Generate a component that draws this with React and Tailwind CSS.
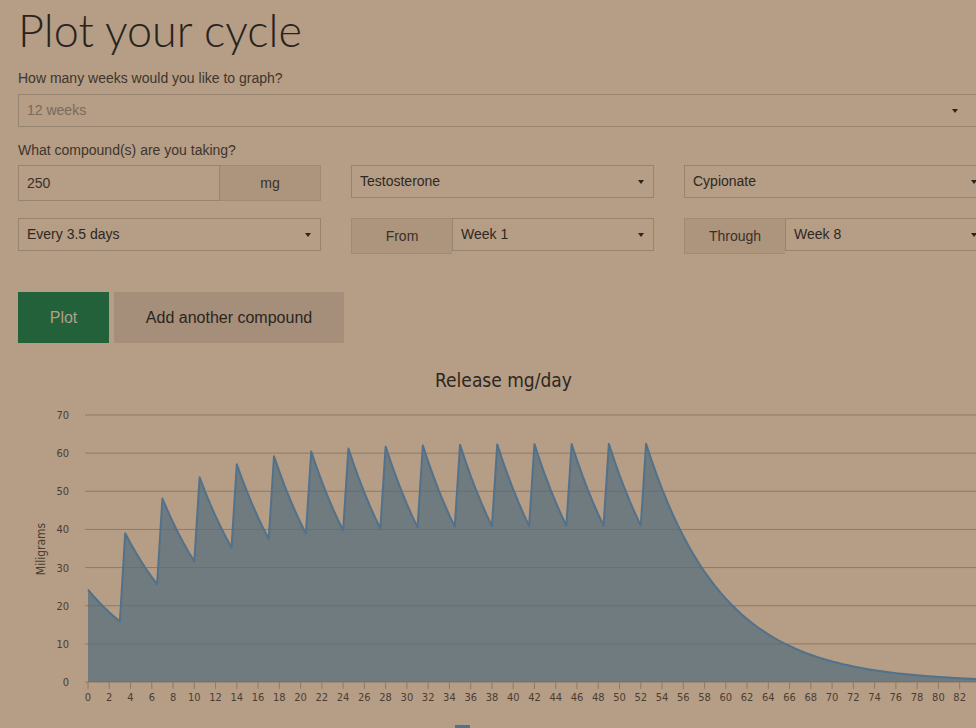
import React from "react";

function Caret() {
  return (
    <span className="absolute top-1/2 -translate-y-1/2 w-0 h-0 border-l-[3.5px] border-r-[3.5px] border-t-[4px] border-l-transparent border-r-transparent border-t-[#2b2520]" />
  );
}

function Select({ text, muted, className = "", caretClass = "right-[15px]" }) {
  return (
    <div
      className={
        "relative h-[33px] border border-[#978470] flex items-center pl-[8px] text-[14px] " +
        (muted ? "text-[#7a6a5a] " : "text-[#2f2822] ") +
        className
      }
    >
      <span>{text}</span>
      <span className={"absolute top-0 bottom-0 " + caretClass}>
        <Caret />
      </span>
    </div>
  );
}

function Addon({ text, className = "" }) {
  return (
    <div
      className={
        "h-[36px] bg-[#ac947d] border border-[#a08a74] flex items-center justify-center text-[14px] text-[#3a3028] " +
        className
      }
    >
      {text}
    </div>
  );
}

const K = 0.14;
const A = 24.2;
const X0 = 88;
const PXD = 10.63;
const Y0 = 327;
const PXM = 3.814;

function Chart() {
  const inj = Array.from({ length: 16 }, (_, i) => i * 3.5);
  const pts = [];
  for (let i = 0; i <= 168; i++) {
    const t = i * 0.5;
    let v = 0;
    for (const ti of inj) if (ti <= t + 1e-9) v += A * Math.exp(-K * (t - ti));
    pts.push([X0 + t * PXD, Y0 - v * PXM]);
  }
  const line = pts.map((p, i) => (i ? "L" : "M") + p[0].toFixed(2) + "," + p[1].toFixed(2)).join(" ");
  const area = line + ` L${pts[pts.length - 1][0].toFixed(2)},${Y0} L${X0},${Y0} Z`;
  const grid = [0, 10, 20, 30, 40, 50, 60, 70];
  const ticks = Array.from({ length: 43 }, (_, i) => i * 2);
  const font = "'DejaVu Sans Condensed', 'DejaVu Sans', sans-serif";
  return (
    <svg width="976" height="373" className="block mt-[12px]" fontFamily={font}>
      <text x="503.5" y="32" textAnchor="middle" fontSize="19" fill="#2e2620">
        Release mg/day
      </text>
      {grid.map((g) => (
        <g key={g}>
          <line x1="85" x2="976" y1={Y0 - g * PXM} y2={Y0 - g * PXM} stroke="#8e7b66" strokeWidth="1" />
          <text x="69" y={Y0 - g * PXM + 4} textAnchor="end" fontSize="11" fill="#4a3e34">
            {g}
          </text>
        </g>
      ))}
      <text
        x="45"
        y="194"
        textAnchor="middle"
        fontSize="12"
        fill="#4a3e34"
        transform="rotate(-90 45 194)"
      >
        Miligrams
      </text>
      <path d={area} fill="rgba(81,108,123,0.7)" />
      <path d={line} fill="none" stroke="#52718a" strokeWidth="2" strokeLinejoin="round" />
      {ticks.map((d) => (
        <g key={d}>
          <line x1={X0 + d * PXD} x2={X0 + d * PXD} y1={Y0} y2={Y0 + 7} stroke="#8e7b66" strokeWidth="1" />
          {d <= 82 && (
            <text x={X0 + d * PXD} y="346" textAnchor="middle" fontSize="11" fill="#4a3e34">
              {d}
            </text>
          )}
        </g>
      ))}
      <rect x="455" y="370" width="15" height="10" fill="#587087" />
    </svg>
  );
}

export default function App() {
  return (
    <div className="w-[976px] h-[728px] overflow-hidden bg-[#b59d86] font-['Liberation_Sans',Arial,sans-serif]">
      <div className="pl-[18px] w-[987px]">
        <h1 className="mt-[2px] text-[45px] leading-[56px] font-light font-['Lato',sans-serif] text-[#2a231d]">
          Plot your cycle
        </h1>
        <div className="mt-[10px] text-[14px] leading-[20px] text-[#3f352c]">
          How many weeks would you like to graph?
        </div>
        <Select className="mt-[6px] w-[969px]" text="12 weeks" muted caretClass="right-[34px]" />
        <div className="mt-[13px] text-[14px] leading-[20px] text-[#3f352c]">What compound(s) are you taking?</div>
        <div className="mt-[5px] grid grid-cols-[303px_303px_303px] gap-x-[30px] items-start">
          <div className="flex">
            <div className="w-[202px] h-[36px] border border-[#978470] flex items-center pl-[8px] text-[14px] text-[#3a3028]">
              250
            </div>
            <Addon text="mg" className="w-[101px] border-l-0 border-[#978470]" />
          </div>
          <Select text="Testosterone" />
          <Select text="Cypionate" />
        </div>
        <div className="mt-[17px] grid grid-cols-[303px_303px_303px] gap-x-[30px] items-start">
          <Select text="Every 3.5 days" />
          <div className="flex items-start">
            <Addon text="From" className="w-[101px] border-r-0" />
            <Select text="Week 1" className="w-[202px]" />
          </div>
          <div className="flex items-start">
            <Addon text="Through" className="w-[101px] border-r-0" />
            <Select text="Week 8" className="w-[202px]" />
          </div>
        </div>
        <div className="mt-[38px] flex gap-[5px]">
          <button className="w-[91px] h-[51px] bg-[#23613a] text-[16px] text-[#b39f88]">Plot</button>
          <button className="w-[230px] h-[51px] bg-[#a58f7a] text-[16px] text-[#2c241e]">Add another compound</button>
        </div>
      </div>
      <Chart />
    </div>
  );
}
